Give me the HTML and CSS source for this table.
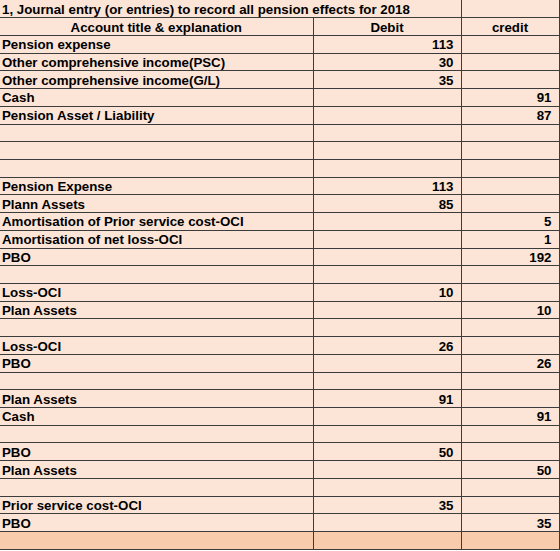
FILE: index.html
```html
<!DOCTYPE html>
<html lang="en">
<head>
    <meta charset="UTF-8">
    <title>Pension Journal Entries 2018</title>
    <link rel="stylesheet" href="styles.css">
</head>
<body>
    <table class="sheet">
        <colgroup>
            <col class="col-title">
            <col class="col-debit">
            <col class="col-credit">
        </colgroup>
        <tbody>
            <tr class="caption-row">
                <td colspan="2">1, Journal entry (or entries) to record all pension effects for 2018</td>
                <td></td>
            </tr>
            <tr class="head-row">
                <td>Account title &amp; explanation</td>
                <td>Debit</td>
                <td>credit</td>
            </tr>
            <tr><td>Pension expense</td><td class="num">113</td><td class="num"></td></tr>
            <tr><td>Other comprehensive income(PSC)</td><td class="num">30</td><td class="num"></td></tr>
            <tr><td>Other comprehensive income(G/L)</td><td class="num">35</td><td class="num"></td></tr>
            <tr><td>Cash</td><td class="num"></td><td class="num">91</td></tr>
            <tr><td>Pension Asset / Liability</td><td class="num"></td><td class="num">87</td></tr>
            <tr><td></td><td></td><td></td></tr>
            <tr><td></td><td></td><td></td></tr>
            <tr><td></td><td></td><td></td></tr>
            <tr><td>Pension Expense</td><td class="num">113</td><td class="num"></td></tr>
            <tr><td>Plann Assets</td><td class="num">85</td><td class="num"></td></tr>
            <tr><td>Amortisation of Prior service cost-OCI</td><td class="num"></td><td class="num">5</td></tr>
            <tr><td>Amortisation of net loss-OCI</td><td class="num"></td><td class="num">1</td></tr>
            <tr><td>PBO</td><td class="num"></td><td class="num">192</td></tr>
            <tr><td></td><td></td><td></td></tr>
            <tr><td>Loss-OCI</td><td class="num">10</td><td class="num"></td></tr>
            <tr><td>Plan Assets</td><td class="num"></td><td class="num">10</td></tr>
            <tr><td></td><td></td><td></td></tr>
            <tr><td>Loss-OCI</td><td class="num">26</td><td class="num"></td></tr>
            <tr><td>PBO</td><td class="num"></td><td class="num">26</td></tr>
            <tr><td></td><td></td><td></td></tr>
            <tr><td>Plan Assets</td><td class="num">91</td><td class="num"></td></tr>
            <tr><td>Cash</td><td class="num"></td><td class="num">91</td></tr>
            <tr><td></td><td></td><td></td></tr>
            <tr><td>PBO</td><td class="num">50</td><td class="num"></td></tr>
            <tr><td>Plan Assets</td><td class="num"></td><td class="num">50</td></tr>
            <tr><td></td><td></td><td></td></tr>
            <tr><td>Prior service cost-OCI</td><td class="num">35</td><td class="num"></td></tr>
            <tr><td>PBO</td><td class="num"></td><td class="num">35</td></tr>
            <tr class="total-row"><td></td><td></td><td></td></tr>
        </tbody>
    </table>
</body>
</html>
```

FILE: styles.css
```css
body {
    margin: 0;
    padding: 0;
    background-color: #ffffff;
    font-family: "Liberation Sans", Arial, sans-serif;
}
.sheet {
    width: 559px;
    border-collapse: collapse;
    table-layout: fixed;
    background-color: #fce4d6;
    color: #000000;
    font-size: 13.3px;
    font-weight: bold;
}
.col-title {
    width: 313px;
}
.col-debit {
    width: 148px;
}
.col-credit {
    width: 98px;
}
.sheet tr {
    height: 17.72px;
}
.sheet td {
    padding: 1px 2px 0 2px;
    line-height: 15px;
    border: 1px solid #3c3c3c;
    white-space: nowrap;
    overflow: hidden;
}
.sheet tr td:first-child {
    border-left: none;
}
.caption-row td {
    border-top: none;
}
.head-row td {
    text-align: center;
}
.sheet td.num {
    text-align: right;
    padding-right: 7px;
}
.total-row td {
    background-color: #f8cbad;
}
```
